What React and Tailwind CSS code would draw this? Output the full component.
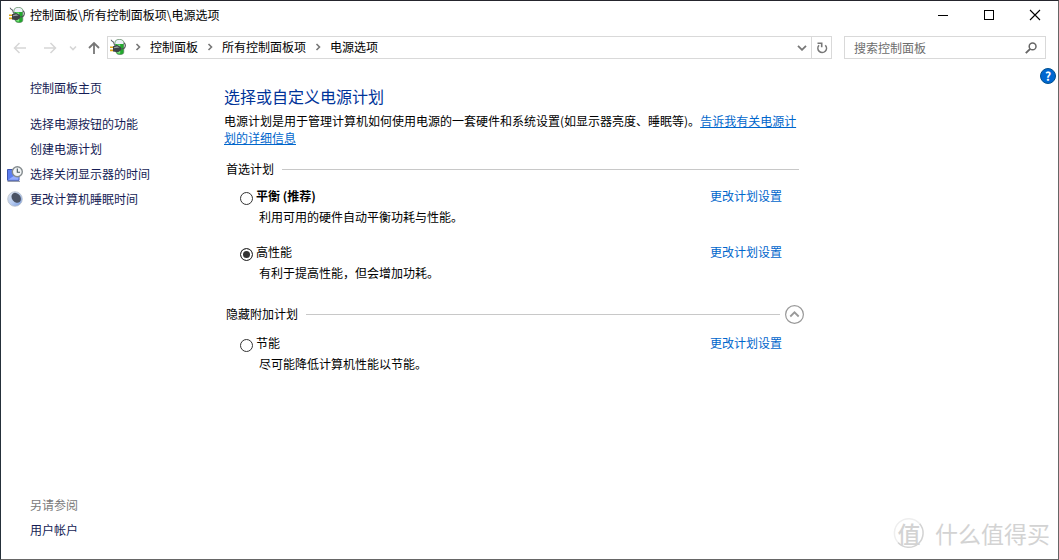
import React, { useState } from 'react';

const SIDE_LINKS = [
  { label: '选择电源按钮的功能' },
  { label: '创建电源计划' },
  { label: '选择关闭显示器的时间', icon: ClockIcon },
  { label: '更改计算机睡眠时间', icon: MoonIcon },
];

const PREFERRED_PLANS = [
  { id: 'balanced', name: '平衡 (推荐)', note: '利用可用的硬件自动平衡功耗与性能。', bold: true },
  { id: 'high', name: '高性能', note: '有利于提高性能，但会增加功耗。' },
];

const EXTRA_PLANS = [{ id: 'saver', name: '节能', note: '尽可能降低计算机性能以节能。' }];

function PowerIcon() {
  return (
    <svg className="size-4 shrink-0" viewBox="0 0 16 16" aria-hidden="true">
      <path d="M1.200.8C1.500 3 3 2 3.600 3.200S4 5.500 5 6.500" fill="none" stroke="#5d6468" strokeWidth="1.100" />
      <path d="M5 3.600C5 1.500 6.500.4 9.300.4s4.500 1.100 4.500 3.200v9.600c0 1.600-1.600 2.500-3.700 2.500S6.400 14.800 6 13z" fill="#23a82e" stroke="#667a6a" strokeWidth=".6" />
      <path d="M5.300 5V3.600C5.300 1.700 6.700.7 9.300.7s4.200 1 4.200 2.900V5z" fill="#eef0f8" />
      <path d="M6.800 5.600h3.400v9H8.500c-.9-.3-1.500-.9-1.700-1.700z" fill="#7de87c" />
      <path d="M14 3.800c1.600 1 1.700 3.600.6 5C13.800 9.800 12.500 10 11 10" fill="none" stroke="#4a4f52" strokeWidth="1.100" />
      <path d="M0 8.200h3.500M0 11.400h3.500" stroke="#e0a815" strokeWidth="1.600" />
      <path d="M3 7.200 7.300 6l3.700 2v3.300L8 13.200 3 12.600z" fill="#3d4144" />
      <path d="M4 8.200 7.200 7.300l2.300 1.200L4 9.300z" fill="#9ba1a4" />
    </svg>
  );
}

function ClockIcon() {
  return (
    <svg className="size-4" viewBox="0 0 16 16" aria-hidden="true">
      <path d="M.5 3.500h11.500v10.800H.5z" fill="#5c7df0" stroke="#3e55ad" />
      <path d="M1 13.800 11.500 7v6.800z" fill="#94adff" />
      <path d="M.5 15.400h12.500" stroke="#8c93a6" />
      <circle cx="10.300" cy="5.700" r="5" fill="#f2f5f6" stroke="#848b8e" strokeWidth="1.400" />
      <path d="M10.300 2.600v3.600h2.700" fill="none" stroke="#44565c" strokeWidth="1.100" />
    </svg>
  );
}

function MoonIcon() {
  return (
    <svg className="size-4" viewBox="0 0 16 16" aria-hidden="true">
      <defs>
        <linearGradient id="moon" x1="0" y1="0" x2="1" y2="1">
          <stop offset="0" stopColor="#e3e8ef" />
          <stop offset=".55" stopColor="#b4c9ef" />
          <stop offset="1" stopColor="#6d94dc" />
        </linearGradient>
      </defs>
      <circle cx="8" cy="8" r="7.300" fill="url(#moon)" stroke="#b9c0ca" strokeWidth=".8" />
      <ellipse cx="9.200" cy="6.800" rx="4.200" ry="5.400" fill="#4a5263" transform="rotate(-40 9.200 6.800)" />
    </svg>
  );
}

function Chevron({ className }) {
  return (
    <svg className={className} viewBox="0 0 6 8" fill="none" stroke="currentColor" strokeWidth="1.600" aria-hidden="true">
      <path d="M1.500 1 4.500 4 1.500 7" />
    </svg>
  );
}

function TitleBar() {
  return (
    <header className="flex h-7 items-center pl-2">
      <PowerIcon />
      <h1 className="ml-[5px] flex-1">控制面板\所有控制面板项\电源选项</h1>
      <div className="flex self-stretch text-black">
        <button type="button" aria-label="最小化" className="flex w-[46px] items-center justify-center">
          <svg className="size-3" viewBox="0 0 12 12" shapeRendering="crispEdges">
            <path d="M1 6.500h10" stroke="currentColor" />
          </svg>
        </button>
        <button type="button" aria-label="最大化" className="flex w-[46px] items-center justify-center">
          <svg className="size-3" viewBox="0 0 12 12" shapeRendering="crispEdges">
            <path d="M1.500 1.500h9v9h-9z" fill="none" stroke="currentColor" />
          </svg>
        </button>
        <button type="button" aria-label="关闭" className="flex w-[46px] items-center justify-center">
          <svg className="size-3" viewBox="0 0 12 12">
            <path d="m1 1 10 10M11 1 1 11" stroke="currentColor" strokeWidth="1.100" />
          </svg>
        </button>
      </div>
    </header>
  );
}

function NavBar() {
  return (
    <div className="mt-[7px] flex h-[23px] items-stretch pr-3">
      <nav className="flex w-[106px] shrink-0 items-center pl-3 text-[#d6d6d6]" aria-label="导航">
        <button type="button" aria-label="后退">
          <svg className="size-[14px]" viewBox="0 0 14 14" fill="none" stroke="currentColor" strokeWidth="1.500">
            <path d="M13 7H1.500M6.500 2l-5 5 5 5" />
          </svg>
        </button>
        <button type="button" aria-label="前进" className="ml-4">
          <svg className="size-[14px]" viewBox="0 0 14 14" fill="none" stroke="currentColor" strokeWidth="1.500">
            <path d="M1 7h11.500M7.500 2l5 5-5 5" />
          </svg>
        </button>
        <button type="button" aria-label="最近位置" className="ml-[13px]">
          <Chevron className="h-2 w-[6px] rotate-90" />
        </button>
        <button type="button" aria-label="上移" className="ml-[11px] text-[#777]">
          <svg className="size-[14px]" viewBox="0 0 14 14" fill="none" stroke="currentColor" strokeWidth="1.800">
            <path d="M7 13V2M2 7l5-5 5 5" />
          </svg>
        </button>
      </nav>

      <div className="flex flex-1 items-center border border-[#d9d9d9] pl-[2px]">
        <div className="flex flex-1 items-center pb-[2px]">
          <PowerIcon />
          <ol className="flex items-center">
            {['控制面板', '所有控制面板项', '电源选项'].map((crumb) => (
              <li key={crumb} className="flex items-center">
                <Chevron className="mx-[9px] h-2 w-[6px] text-[#777]" />
                <a href="#">{crumb}</a>
              </li>
            ))}
          </ol>
        </div>
        <button type="button" aria-label="历史记录" className="flex w-[19px] items-center justify-center text-[#777]">
          <svg className="h-[6px] w-[10px]" viewBox="0 0 10 6" fill="none" stroke="currentColor" strokeWidth="1.800">
            <path d="m1 .8 4 4 4-4" />
          </svg>
        </button>
        <button
          type="button"
          aria-label="刷新"
          className="flex w-5 items-center justify-center self-stretch border-l border-[#d9d9d9] text-[#777]"
        >
          <svg className="size-3" viewBox="0 0 12 12" fill="none" stroke="currentColor" strokeWidth="1.600">
            <path d="M9.300 3.200A4.300 4.300 0 1 1 3 3.300M1.500 1.300h4.200v4" />
          </svg>
        </button>
      </div>

      <form className="ml-3 flex w-[202px] items-center border border-[#d9d9d9] pr-2 pl-[9px]">
        <input
          type="search"
          aria-label="搜索控制面板"
          placeholder="搜索控制面板"
          className="min-w-0 flex-1 outline-none placeholder:text-[#6d6d6d]"
        />
        <svg className="size-3" viewBox="0 0 12 12" fill="none" stroke="#666" strokeWidth="1.500" aria-hidden="true">
          <circle cx="7.600" cy="4.400" r="3.400" />
          <path d="M5.200 6.800.8 11.200" strokeWidth="1.900" />
        </svg>
      </form>
    </div>
  );
}

function Sidebar() {
  return (
    <aside className="flex w-[223px] shrink-0 flex-col pt-4 pb-[17px] pl-[6px] leading-[25px] text-[#151c55]">
      <a href="#" className="ml-[23px]">控制面板主页</a>
      <ul className="mt-[11px]">
        {SIDE_LINKS.map(({ label, icon: Icon }) => (
          <li key={label} className="flex items-center">
            <span className="mr-[7px] w-4">{Icon && <Icon />}</span>
            <a href="#">{label}</a>
          </li>
        ))}
      </ul>
      <div className="mt-auto ml-[23px]">
        <h2 className="text-[#7a7a7a]">另请参阅</h2>
        <a href="#" className="block">用户帐户</a>
      </div>
    </aside>
  );
}

function Plan({ plan, selected, onSelect }) {
  return (
    <div className="pr-[22px] pl-4">
      <div className="flex items-center leading-[18px]">
        <input
          type="radio"
          name="plan"
          id={plan.id}
          checked={selected}
          onChange={() => onSelect(plan.id)}
          className="mt-[3px] size-[13px] appearance-none rounded-full border border-[#333] checked:bg-[#333] checked:shadow-[inset_0_0_0_2px_white]"
        />
        <label htmlFor={plan.id} className={plan.bold ? 'ml-[3px] flex-1 pb-[2px] font-bold' : 'ml-[3px] flex-1 pb-[2px]'}>
          {plan.name}
        </label>
        <a href="#" className="pb-[2px] text-[#0066cc]">更改计划设置</a>
      </div>
      <p className="pl-[19px] leading-5">{plan.note}</p>
    </div>
  );
}

function PlanSettings() {
  const [selected, setSelected] = useState('high');
  const [open, setOpen] = useState(true);

  return (
    <main className="max-w-[580px] flex-1 pt-[25px]">
      <h2 className="text-base leading-6 text-[#003399]">选择或自定义电源计划</h2>
      <p className="mt-1 leading-[17px]">
        电源计划是用于管理计算机如何使用电源的一套硬件和系统设置(如显示器亮度、睡眠等)。
        <a href="#" className="text-[#0066cc] underline">告诉我有关电源计划的详细信息</a>
      </p>

      <section className="mt-[13px]">
        <div className="flex h-[21px] items-center pr-[5px] pl-[2px]">
          <h3 className="pb-[2px]">首选计划</h3>
          <div className="ml-2 h-px flex-1 bg-[#c8c8c8]" />
        </div>
        <div className="mt-[7px] flex flex-col gap-4">
          {PREFERRED_PLANS.map((plan) => (
            <Plan key={plan.id} plan={plan} selected={selected === plan.id} onSelect={setSelected} />
          ))}
        </div>
      </section>

      <section className="mt-[21px]">
        <div className="flex h-[21px] items-center pl-[2px]">
          <h3 className="pb-[2px]">隐藏附加计划</h3>
          <div className="ml-2 h-px flex-1 bg-[#c8c8c8]" />
          <button
            type="button"
            aria-label="隐藏附加计划"
            aria-expanded={open}
            onClick={() => setOpen(!open)}
            className="ml-[5px] text-[#999]"
          >
            <svg className="size-[19px]" viewBox="0 0 19 19" fill="none" stroke="currentColor">
              <circle cx="9.500" cy="9.500" r="8.900" strokeWidth="1.200" />
              <path d="m5.300 11.500 4.200-4.200 4.200 4.200" strokeWidth="1.800" />
            </svg>
          </button>
        </div>
        {open && (
          <div className="mt-[9px]">
            {EXTRA_PLANS.map((plan) => (
              <Plan key={plan.id} plan={plan} selected={selected === plan.id} onSelect={setSelected} />
            ))}
          </div>
        )}
      </section>
    </main>
  );
}

function Watermark() {
  return (
    <div className="absolute right-2 bottom-[10px] flex items-center text-[#d3d3d3]">
      <span className="relative flex size-7 items-center justify-center text-[23px] leading-7 font-medium">
        <svg className="absolute inset-0 size-full overflow-visible" viewBox="0 0 28 28" fill="none" stroke="currentColor" strokeWidth="1.500" aria-hidden="true">
          <path d="M24.500 4.500A14 14 0 0 1 3 23.500" />
          <path d="M3 23.500A14 14 0 0 1 24.500 4.500" stroke="#eeeeee" />
        </svg>
        值
      </span>
      <span className="ml-3 text-[23px] leading-8">什么值得买</span>
    </div>
  );
}

export default function App() {
  return (
    <div className="relative flex min-h-screen flex-col border border-t-[#25252d] border-r-[#666] border-b-[#666] border-l-[#25303a] bg-white font-['Noto_Sans_CJK_SC',sans-serif] text-xs text-black">
      <TitleBar />
      <NavBar />
      <div className="flex flex-1">
        <Sidebar />
        <PlanSettings />
        <button
          type="button"
          aria-label="帮助"
          className="mt-[9px] mr-[2px] ml-auto flex size-4 items-center justify-center rounded-full border border-[#00508f] bg-[#0067d0] text-xs leading-none font-bold text-white"
        >
          ?
        </button>
      </div>
      <Watermark />
    </div>
  );
}
